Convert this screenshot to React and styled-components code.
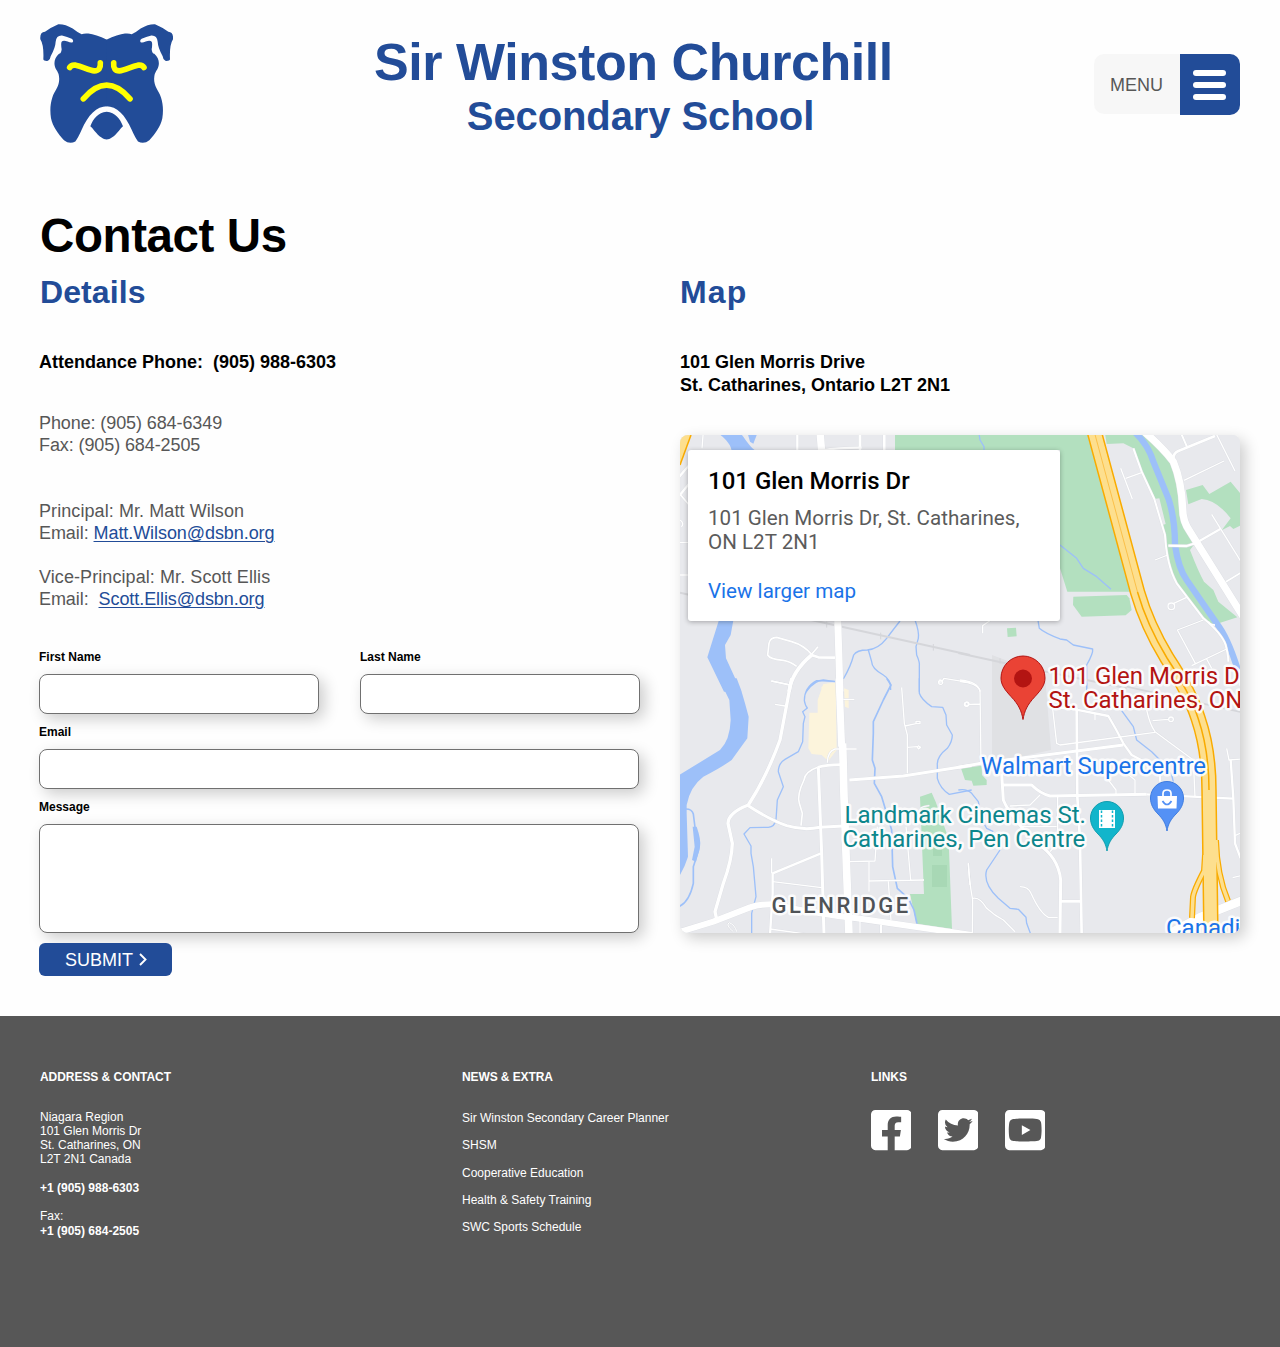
import React from "react";
import styled, { createGlobalStyle } from "styled-components";
import { FaFacebookSquare, FaTwitterSquare, FaYoutubeSquare } from "react-icons/fa";

const BLUE = "#224c98";
const GREY = "#575757";
const SANS = `"Liberation Sans", Helvetica, Arial, sans-serif`;

const GlobalStyle = createGlobalStyle`
  *, *::before, *::after { box-sizing: border-box; }
  body { margin: 0; background: #fefefe; font-family: ${SANS}; color: #000; }
  h1, h2, h3, p, ul { margin: 0; padding: 0; }
  ul { list-style: none; }
`;

const Page = styled.div`
  width: 1280px;
  min-height: 1347px;
  display: flex;
  flex-direction: column;
`;

const Header = styled.header`
  display: flex;
  justify-content: space-between;
  align-items: flex-start;
  height: 207px;
  padding: 24px 40px 0;
`;

const Brand = styled.div`
  padding-top: 10px;
  text-align: center;
  font-weight: 700;
  color: ${BLUE};
`;

const BrandName = styled.div`
  font-size: 52px;
  line-height: 56px;
  letter-spacing: -0.45px;
`;

const BrandSub = styled.div`
  padding: 1px 0 0 14px;
  font-size: 40px;
  line-height: 50px;
  letter-spacing: -0.1px;
`;

const MenuButton = styled.button`
  display: flex;
  width: 146px;
  height: 61px;
  margin-top: 30px;
  padding: 0;
  border: 0;
  background: none;
  font: 18px ${SANS};
  color: ${GREY};
`;

const MenuText = styled.span`
  flex: 1;
  height: 60px;
  padding-left: 16px;
  line-height: 62px;
  text-align: left;
  background: #f7f7f7;
  border-radius: 10px 0 0 10px;
`;

const MenuBars = styled.span`
  display: flex;
  flex-direction: column;
  align-items: center;
  gap: 6px;
  width: 60px;
  height: 61px;
  padding-top: 16px;
  background: ${BLUE};
  border-radius: 0 10px 10px 0;
`;

const Bar = styled.span`
  width: 33px;
  height: 6px;
  border-radius: 3px;
  background: #fff;
`;

const Main = styled.main`
  height: 809px;
  padding: 1px 40px 0 39px;
`;

const PageTitle = styled.h1`
  padding: 0 0 10px 1px;
  font-size: 47.5px;
  line-height: 56px;
  letter-spacing: -0.4px;
`;

const Columns = styled.div`
  display: grid;
  grid-template-columns: 601px 560px;
  column-gap: 40px;
`;

const SectionTitle = styled.h2`
  padding-left: ${(p) => p.$inset || 0}px;
  font-size: 32px;
  line-height: 36px;
  letter-spacing: ${(p) => p.$track || 0}px;
  color: ${BLUE};
`;

const Lead = styled.p`
  padding-top: 41px;
  font-size: 18px;
  font-weight: 700;
  line-height: 23px;
  white-space: pre-line;
`;

const Details = styled.div`
  display: flex;
  flex-direction: column;
  gap: ${(p) => p.$gap}px;
  margin-top: ${(p) => p.$top}px;
  font-size: 18px;
  line-height: 22px;
  letter-spacing: ${(p) => p.$track || 0}px;
  color: ${GREY};
`;

const Person = styled.p`
  letter-spacing: 0.08px;
`;

const Mail = styled.a`
  color: ${BLUE};
  text-decoration: underline;
  text-decoration-thickness: 1px;
  text-underline-offset: 2px;
  margin-left: ${(p) => p.$gap || 0}px;
`;

const Form = styled.form`
  display: flex;
  flex-direction: column;
  align-items: flex-start;
  gap: 11px;
  margin-top: 40px;
`;

const FieldRow = styled.div`
  display: flex;
  gap: 41px;
`;

const Field = styled.label`
  display: flex;
  flex-direction: column;
  gap: 10px;
  width: ${(p) => p.$width}px;
  font-size: 12px;
  font-weight: 700;
  line-height: 14px;
`;

const Input = styled.input`
  width: 100%;
  height: 40px;
  padding: 0 12px;
  border: 1px solid #707070;
  border-radius: 8px;
  background: #fff;
  box-shadow: 5px 5px 15px rgba(0, 0, 0, 0.2);
`;

const TextArea = styled(Input)`
  display: block;
  height: 109px;
  resize: none;
`;

const Submit = styled.button`
  display: flex;
  align-items: center;
  gap: 6px;
  width: 133px;
  height: 33px;
  margin-top: -1px;
  padding: 1px 0 0 26px;
  border: 0;
  border-radius: 6px;
  background: ${BLUE};
  font: 18px ${SANS};
  color: #fff;
  position: relative;

  svg {
    margin-top: -1px;
  }
`;

const MapFrame = styled.div`
  position: relative;
  width: 560px;
  height: 498px;
  margin-top: 38px;
  border-radius: 8px;
  background: #e8e9ed;
  box-shadow: 5px 5px 15px rgba(0, 0, 0, 0.2);
  overflow: hidden;
`;

const InfoCard = styled.div`
  position: absolute;
  left: 8px;
  top: 15px;
  width: 372px;
  height: 171px;
  padding: 16px 20px;
  border-radius: 3px;
  background: #fff;
  box-shadow: 0 1px 5px rgba(0, 0, 0, 0.3);
  font-family: Roboto, sans-serif;
  font-size: 20.6px;
  line-height: 24px;
  color: #5b5b5b;
`;

const InfoTitle = styled.h3`
  margin-bottom: 9px;
  font-size: 24px;
  font-weight: 500;
  line-height: 31px;
  color: #000;
`;

const InfoLink = styled.a`
  display: block;
  margin-top: 25px;
  color: #1a73e8;
`;

const Footer = styled.footer`
  display: grid;
  grid-template-columns: 422px 409px 1fr;
  height: 331px;
  padding: 54px 40px 0;
  background: ${GREY};
  color: #fff;
  font-size: 12px;
  line-height: 14px;
`;

const FooterTitle = styled.h3`
  font-size: 12px;
  line-height: 14px;
  letter-spacing: ${(p) => p.$track || 0}px;
`;

const Address = styled.p`
  margin-top: ${(p) => p.$top}px;
  white-space: pre-line;
  font-weight: ${(p) => (p.$bold ? 700 : 400)};
`;

const FooterList = styled.ul`
  display: flex;
  flex-direction: column;
  gap: 13.3px;
  margin-top: 27px;
`;

const Socials = styled.div`
  display: flex;
  gap: 26.5px;
  margin-top: 23px;

  svg {
    width: 40.4px;
    height: 46px;
  }
`;

/* The surveyed area is split in four sheets of 300 x 265, drawn at three units per pixel. */
const SHEETS = {
  nw: {
    at: "translate(-10 -10) scale(0.33333)",
    parks: ["M675 20H910V75H675Z"],
    sand: ["M452 790Q465 772 490 775L500 800Z"],
    water: [
      "M145 25C165 40 185 60 185 80H262C240 68 228 45 212 25Z",
      "M233 25H262L250 56L240 50Z",
      "M150 575H192L182 630L165 660L168 700L214 800H162L112 697L125 655Z",
    ],
    rails: [["M410 582L900 690", 6], ["M470 590V608M632 623V643M790 657V677", 3], ["M30 503L60 510", 6]],
    streams: [
      ["M690 588Q665 620 650 640Q625 672 592 675Q560 675 551 690Q542 725 520 762", 4],
      ["M595 675L605 710Q605 730 640 750Q665 765 662 795", 4],
      ["M735 585Q748 620 745 640L738 665L740 690Q750 712 748 725V800", 4],
      ["M410 798Q435 765 460 765L495 770", 4],
    ],
    roads: [
      ["M503 580L510 800", 21],
      ["M425 690L445 697L495 698", 8],
      ["M425 690Q365 740 357 800", 11],
      ["M444 665L425 688Q400 660 365 650L320 637Q300 638 297 655L293 690Q300 703 340 706Q362 710 380 724", 5],
      ["M303 768L355 778", 4],
      ["M382 20V80", 7], ["M450 20L455 80", 22], ["M457 76Q500 68 575 68", 7], ["M570 20V80", 8], ["M643 20V80", 8],
      ["M100 20L96 70", 4], ["M28 155L56 122", 7], ["M28 212L56 178", 7], ["M30 208L56 238", 5],
      ["M30 352H60M30 450H60M30 285Q44 295 34 305", 4],
      ["M814 772L822 760L900 773M818 770A6 6 0 1 0 806 774A6 6 0 1 0 818 770", 4],
    ],
  },
  ne: {
    at: "translate(280 -10) scale(0.33333)",
    parks: [
      "M-10 20H380L515 500H322L300 430V75H-10Z",
      "M340 515L500 510L508 520L515 555L497 571L365 575L339 540Z",
      "M141 610L168 608L170 634L143 636Z",
      "M435 25H560C600 70 640 110 660 160L668 290L705 355L690 375Q715 440 732 470L760 495L775 530L832 577L760 600L730 580C700 540 650 480 635 440L620 370L608 300L617 297L598 220L583 222L545 140L520 70L490 55L440 57Z",
      "M678 195L728 180L748 207L812 170L845 210V300L820 312L810 303L785 316L812 280Q770 225 725 222L685 238Z",
    ],
    sand: [],
    water: [],
    rails: [["M-5 684L150 718L500 790", 6], ["M120 700V716", 3]],
    streams: [
      ["M525 22Q565 60 580 110L625 220Q645 280 645 360Q655 430 680 465L770 595Q805 640 835 740", 19],
      ["M300 360L350 400L370 430L410 455L453 493", 4],
      ["M57 25L60 45L72 65V80", 4],
      ["M233 580L238 610Q255 625 300 642L320 645L340 660L398 672Q400 685 380 720V800", 4],
    ],
    roads: [
      ["M555 22Q610 70 640 110Q665 170 668 250Q668 290 690 320L850 576", 22],
      ["M645 120L640 100Q640 85 655 78L765 33", 8], ["M662 22L682 68", 6],
      ["M768 25L825 138", 4], ["M672 166L792 108", 4], ["M755 268L842 408", 4],
      ["M625 362L680 363L708 354L781 312", 7], ["M798 470L845 442", 5],
      ["M520 70L545 140L583 222L615 330Q620 420 650 475L730 580Q785 625 797 660Q805 690 805 710", 6],
      ["M482 130L517 222M497 160L545 143M585 405L623 390", 4],
      ["M680 517L641 535M644 544A10 10 0 1 0 624 544A10 10 0 1 0 644 544", 4],
      ["M730 585L652 615L706 715M695 722L800 672M740 702L755 730M765 600Q750 600 745 590", 4],
      ["M68 625V602L93 585M0 765Q55 770 60 800", 4],
    ],
  },
  sw: {
    at: "translate(-10 245) scale(0.33333)",
    parks: [
      "M750 350L785 338L797 365L830 460L837 510L846 747L740 732L720 642H762L755 470Z",
    ],
    sand: [
      "M460 12L497 8L500 210L475 243L455 225L425 222L415 205L418 98L443 98V60Z",
      "M522 25L536 30V85L525 80Z",
    ],
    water: [
      "M146 -5H200Q215 30 225 70L236 110L232 175L185 240Q150 265 100 290Q60 320 50 375L50 400L54 530Q45 560 28 588V285L150 210Q180 180 182 120L178 60Z",
      "M68 440L80 440Q94 480 90 500L78 545L66 540L74 500Z",
    ],
    rails: [],
    streams: [
      ["M48 387Q66 387 70 402L76 450Q90 480 86 510L70 560V610Q58 665 28 679", 5],
      ["M495 4L440 2Q403 22 403 62Q406 78 412 84L398 95L405 110L400 130L398 185L385 215L345 238Q325 250 325 275L340 320L322 360L318 420Q314 440 295 442L240 443L222 462L243 498V520L250 560L258 650L245 700V765", 4],
      ["M650 -5L663 15L640 60L610 125L610 160L607 240L615 265L613 310L635 350L665 450L668 560L682 625L715 655L732 690L741 732", 5],
      ["M748 -5V40Q755 60 785 80L818 82L828 105L830 135L847 165Q847 185 832 205Q800 230 802 255V295Q810 325 838 343L905 330", 4],
    ],
    roads: [
      ["M507 -5L515 200", 21], ["M518 190L522 350L528 520L537 765", 23],
      ["M25 757L130 725L240 682Q270 672 310 673Q430 700 560 715L905 765", 18],
      ["M365 -5L330 180Q290 290 235 375Q175 398 174 430L187 490Q186 540 160 610L135 695L140 718", 10],
      ["M235 377Q300 420 350 437Q400 452 450 442L520 438", 9],
      ["M445 262L455 520L462 765", 9],
      ["M443 262Q470 254 510 254", 8],
      ["M443 262Q405 275 402 300Q380 345 388 370L397 400L393 437", 5],
      ["M560 207H495Q472 215 472 248", 4],
      ["M453 520L308 580V640L300 765", 7],
      ["M305 535V580M308 605L455 623M300 747L450 768M520 58H553M305 3L358 15M315 73L345 78", 4],
      ["M538 300L700 288L905 256", 9],
      ["M695 22L703 130L712 165V280M705 138L738 131H750V124H738V131M710 202L742 200L745 207L752 202L744 197", 4],
      ["M540 545L615 543L622 440M597 545V635M597 603L762 600M655 605L663 720M708 440L722 600M570 715V765M895 550L900 615", 4],
      ["M633 735V765", 6],
      ["M885 72A6 6 0 1 0 897 72A6 6 0 1 0 885 72M810 -2V10", 4],
      ["M750 385Q760 378 778 377M190 755Q165 735 178 728Q195 735 200 755", 3],
    ],
  },
  se: {
    at: "translate(280 245) scale(0.33333)",
    parks: ["M3 265L65 257L66 285L80 300V315L40 317L35 302L15 300Z"],
    sand: [],
    water: [],
    rails: [["M500 20L845 97", 5]],
    streams: [
      ["M380 10V25M485 92L520 140L530 180L575 215L600 240L635 285L640 305", 4],
      ["M-5 330Q20 325 35 340L55 365Q65 425 80 445L100 455M120 510L80 570Q68 610 115 655L150 685L175 688L198 712L200 730L213 765", 4],
    ],
    roads: [
      ["M-5 262L63 250L350 213L490 195", 9],
      ["M350 85L352 350L360 480L365 765", 8],
      ["M270 80L345 88L445 108Q470 150 490 190L515 225L600 270V305", 7],
      ["M275 60L290 190L300 195L585 157", 4],
      ["M128 315H215Q240 340 270 348L560 343", 9], ["M560 343L820 356", 7],
      ["M125 280L130 360Q150 410 230 490Q295 530 302 600L300 765", 9],
      ["M300 664H365", 8],
      ["M293 350V470M150 378L210 375L240 345M185 440H290M270 515L293 490", 4],
      ["M812 240L820 355L825 490L842 535", 7],
      ["M800 205L807 240L842 237M825 467L840 460M818 593L842 587", 4],
      ["M560 90Q570 135 585 155L700 240L705 350M578 122L625 118M640 118A7 7 0 1 0 626 118A7 7 0 1 0 640 118", 4],
      ["M430 280L468 330V343M500 280L525 300V340M405 100V120", 4],
      ["M25 550Q27 600 38 660L37 765M38 655Q60 650 80 685Q105 708 130 720L165 755", 4],
      ["M180 620Q205 620 213 640Q240 700 265 712L293 712", 4],
      ["M0 5Q50 10 60 30L63 250M25 73L62 72M25 73A6 6 0 1 0 13 73A6 6 0 1 0 25 73M0 755L20 760", 4],
      ["M630 760L720 712L845 662", 26],
    ],
  },
};

const sheets = Object.entries(SHEETS);

const Strokes = ({ layer, color, grow = 0 }) =>
  sheets.map(([id, sheet]) => (
    <g key={id} transform={sheet.at} fill="none" stroke={color} strokeLinejoin="round">
      {sheet[layer].map(([d, w]) => (
        <path key={d} d={d} strokeWidth={w + grow} />
      ))}
    </g>
  ));

const Fills = ({ layer, color }) =>
  sheets.map(([id, sheet]) => (
    <g key={id} transform={sheet.at} fill={color}>
      {sheet[layer].map((d) => (
        <path key={d} d={d} />
      ))}
    </g>
  ));

const HIGHWAY = "M413 -8L457.500 157Q467 190 487 223Q510 258 518 283Q529 315 529 355L531 505";
const RAMPS = "M525 420L524 436Q514 455 513 462L512 483M536 405Q537 440 548 466";

const Label = styled.text`
  font-family: Roboto, sans-serif;
  font-size: ${(p) => p.$size || 24}px;
  font-weight: ${(p) => p.$weight || 400};
  letter-spacing: ${(p) => p.$track || 0}px;
  fill: ${(p) => p.$color};
  stroke: #fff;
  stroke-opacity: 0.85;
  stroke-width: 5px;
  stroke-linejoin: round;
  paint-order: stroke;
`;

const StreetMap = () => (
  <svg width="560" height="498" viewBox="0 0 560 498" style={{ display: "block" }}>
    <rect width="560" height="498" fill="#e8e9ed" />
    <path d="M312 220L365 240L371 315L312 328Z" fill="#e0e1e4" />
    <Fills layer="parks" color="#b3e0bf" />
    <path d="M252 430H267V452H252ZM253 411H262V421H253Z" fill="#a8d8b5" />
    <Fills layer="sand" color="#fcf4dc" />
    <Fills layer="water" color="#9dc0f9" />
    <Strokes layer="streams" color="#9dc0f9" />
    <Strokes layer="rails" color="#d5d6da" />
    <Strokes layer="roads" color="#dcdee3" grow={2} />
    <Strokes layer="roads" color="#fff" />
    <path d="M0 0H11L0 30Z" fill="#fddf8e" />
    <path d="M11 0L0 30" stroke="#f9ab00" strokeWidth="1.500" />
    <g fill="none">
      <path d={RAMPS} stroke="#f9ab00" strokeWidth="6" />
      <path d={HIGHWAY} stroke="#f9ab00" strokeWidth="15.500" />
      <path d={RAMPS} stroke="#fddf8e" strokeWidth="3.500" />
      <path d={HIGHWAY} stroke="#fddf8e" strokeWidth="12.500" />
      <path d="M413 -8L457.500 157" stroke="#fbc04a" strokeWidth="1" />
      <path d="M457.500 157Q467 190 487 223Q510 258 518 283Q529 315 529 355" stroke="#f9ab00" strokeWidth="1.500" />
    </g>

    <Label $color="#b31412" x="368.500" y="249">101 Glen Morris Dr</Label>
    <Label $color="#b31412" x="368.500" y="273">St. Catharines, ON</Label>
    <Label $color="#1a73e8" x="301" y="339">Walmart Supercentre</Label>
    <Label $color="#0c868c" x="164.500" y="388">Landmark Cinemas St.</Label>
    <Label $color="#0c868c" x="162.500" y="412">Catharines, Pen Centre</Label>
    <Label $color="#4f5357" $size={22} $weight={500} $track={2.5} x="91.500" y="478">GLENRIDGE</Label>
    <Label $color="#1a73e8" x="486" y="501">Canadian</Label>

    <path
      d="M343 284.500C341.500 276 339 270 331 261.500C325 255 321 250 321 243A22 22 0 0 1 365 243C365 250 361 255 355 261.500C347 270 344.500 276 343 284.500Z"
      fill="#ea4335" stroke="#b31412" strokeWidth="1"
    />
    <circle cx="343" cy="243.500" r="9" fill="#b31412" />

    <path
      d="M427 416C426 409 423 404 418 399C413 394 410.500 389 410.500 383A16.500 16.500 0 0 1 443.500 383C443.500 389 441 394 436 399C431 404 428 409 427 416Z"
      fill="#12b5cb" stroke="#129eaf" strokeWidth="1"
    />
    <path d="M419 375H435V393H419Z" fill="#fff" />
    <path d="M421.500 375.500V393M432.500 375.500V393" stroke="#12b5cb" strokeWidth="1.500" strokeDasharray="2.500 2" />

    <path
      d="M487 396C486 389 483 384 478 379C473 374 470.500 369 470.500 363A16.500 16.500 0 0 1 503.500 363C503.500 369 501 374 496 379C491 384 488 389 487 396Z"
      fill="#5491f5" stroke="#3f7de0" strokeWidth="1"
    />
    <path d="M477.500 361H497L496.500 373.500H478Z" fill="#fff" />
    <path d="M483 361V358.500Q483 355 487 355Q491 355 491 358.500V361" fill="none" stroke="#fff" strokeWidth="1.700" />
    <path d="M482.500 366Q487 373 491.500 366" fill="none" stroke="#5491f5" strokeWidth="1.700" />
  </svg>
);

const HALF_HEAD =
  "M231 77Q197 60 175 58Q162 57 155 60Q140 53 128 43Q105 29 85 30Q65 38 45 53Q29 54 31 75Q42 92 40 135Q41 141 54 140Q61 136 62 126Q76 102 77 83Q79 63 96 64Q112 68 125 74Q132 79 128 84Q122 86 113 82Q99 77 95 83Q92 88 95 105Q94 117 87 119C72 132 70 150 78 165Q90 180 87 203C84 222 74 230 67 250C60 272 60 292 63 312C68 336 84 358 102 378Q118 391 136 382Q145 370 155 347C174 302 200 276 231 276Z";

const Logo = () => (
  <svg width="133" height="120" viewBox="30 29.500 399 360" aria-label="Bulldog">
    <g fill={BLUE}>
      <path d={HALF_HEAD} />
      <path d={HALF_HEAD} transform="matrix(-1 0 0 1 460 0)" />
      <path d="M230 293C204 295 190 314 181 336Q188 341 193 350C208 368 220 376 230 376C240 376 252 368 267 350Q272 341 279 336C270 314 256 295 230 293Z" />
    </g>
    <g fill="none" stroke="#ff0" strokeLinecap="round" strokeWidth="17">
      <path d="M119 160Q124 151 137 153C158 157 176 169 193 170Q213 170 211 146" />
      <path d="M342 160Q337 151 324 153C303 157 285 169 268 170Q249 170 251 146" />
      <path d="M160 254Q230 172 300 254" />
    </g>
  </svg>
);

const PAGES = [
  "Sir Winston Secondary Career Planner",
  "SHSM",
  "Cooperative Education",
  "Health & Safety Training",
  "SWC Sports Schedule",
];

export default function App() {
  return (
    <Page>
      <GlobalStyle />
      <Header>
        <Logo />
        <Brand>
          <BrandName>Sir Winston Churchill</BrandName>
          <BrandSub>Secondary School</BrandSub>
        </Brand>
        <MenuButton type="button">
          <MenuText>MENU</MenuText>
          <MenuBars>
            <Bar />
            <Bar />
            <Bar />
          </MenuBars>
        </MenuButton>
      </Header>

      <Main>
        <PageTitle>Contact Us</PageTitle>
        <Columns>
          <section>
            <SectionTitle $inset={1} $track={0.1}>Details</SectionTitle>
            <Lead>Attendance Phone:&nbsp; (905) 988-6303</Lead>
            <Details $top={38} $gap={0} $track={-0.1}>
              <p>Phone: (905) 684-6349</p>
              <p>Fax: (905) 684-2505</p>
            </Details>
            <Details $top={44} $gap={22} $track={-0.07}>
              <div>
                <Person>Principal: Mr. Matt Wilson</Person>
                <p>Email: <Mail>Matt.Wilson@dsbn.org</Mail></p>
              </div>
              <div>
                <Person>Vice-Principal: Mr. Scott Ellis</Person>
                <p>Email: <Mail $gap={5}>Scott.Ellis@dsbn.org</Mail></p>
              </div>
            </Details>
            <Form>
              <FieldRow>
                <Field $width={280}>First Name<Input /></Field>
                <Field $width={280}>Last Name<Input /></Field>
              </FieldRow>
              <Field $width={600}>Email<Input /></Field>
              <Field $width={600}>Message<TextArea as="textarea" /></Field>
              <Submit type="button">
                SUBMIT
                <svg width="8" height="13" viewBox="0 0 8 13">
                  <path d="M1 1L6.500 6.500L1 12" fill="none" stroke="#fff" strokeWidth="1.900" />
                </svg>
              </Submit>
            </Form>
          </section>

          <section>
            <SectionTitle $track={1.2}>Map</SectionTitle>
            <Lead>{"101 Glen Morris Drive\nSt. Catharines, Ontario L2T 2N1"}</Lead>
            <MapFrame>
              <StreetMap />
              <InfoCard>
                <InfoTitle>101 Glen Morris Dr</InfoTitle>
                <p>101 Glen Morris Dr, St. Catharines,</p>
                <p>ON L2T 2N1</p>
                <InfoLink>View larger map</InfoLink>
              </InfoCard>
            </MapFrame>
          </section>
        </Columns>
      </Main>

      <Footer>
        <div>
          <FooterTitle $track={-0.05}>ADDRESS &amp; CONTACT</FooterTitle>
          <Address $top={26}>{"Niagara Region\n101 Glen Morris Dr\nSt. Catharines, ON\nL2T 2N1 Canada"}</Address>
          <Address $top={15} $bold>+1 (905) 988-6303</Address>
          <Address $top={14}>Fax:</Address>
          <Address $top={1} $bold>+1 (905) 684-2505</Address>
        </div>
        <div>
          <FooterTitle $track={-0.1}>NEWS &amp; EXTRA</FooterTitle>
          <FooterList>
            {PAGES.map((name) => (
              <li key={name}>{name}</li>
            ))}
          </FooterList>
        </div>
        <div>
          <FooterTitle>LINKS</FooterTitle>
          <Socials>
            <FaFacebookSquare preserveAspectRatio="none" />
            <FaTwitterSquare preserveAspectRatio="none" />
            <FaYoutubeSquare preserveAspectRatio="none" />
          </Socials>
        </div>
      </Footer>
    </Page>
  );
}
